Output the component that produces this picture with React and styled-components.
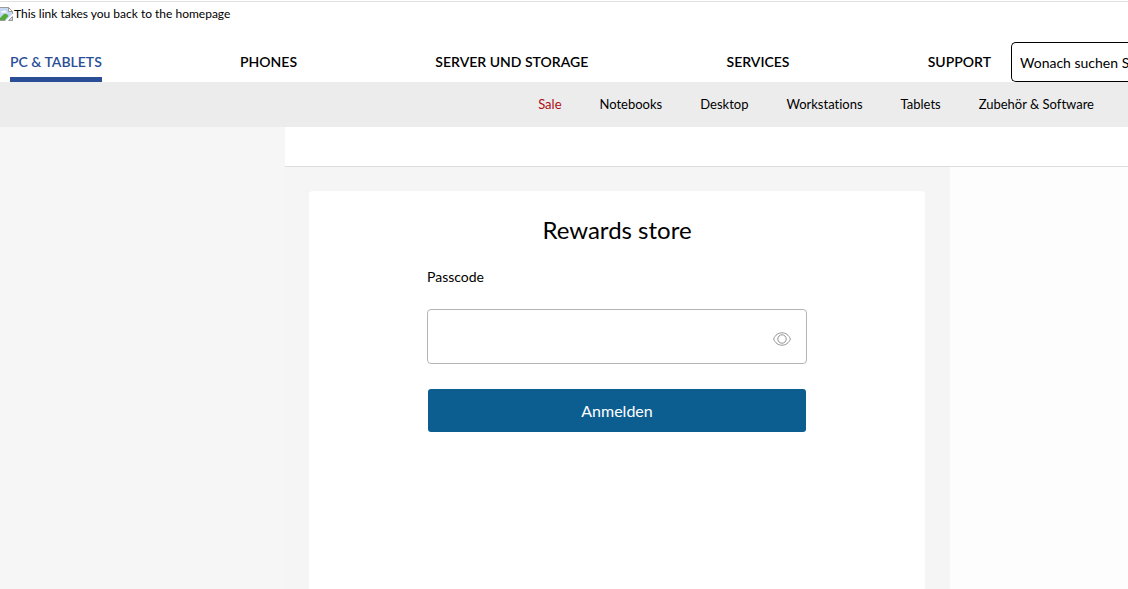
import React, { useState } from "react";
import styled, { createGlobalStyle } from "styled-components";

const GlobalStyle = createGlobalStyle`
  * {
    box-sizing: border-box;
  }
  body {
    margin: 0;
    background: #ffffff;
    color: #000000;
    font-family: Lato, "Open Sans", sans-serif;
    font-size: 14px;
    font-variant-ligatures: none;
    line-height: 20px;
  }
`;

const Page = styled.div`
  display: flex;
  flex-direction: column;
  min-height: 100vh;
  overflow: hidden;
  padding-top: 1px;
`;

const Header = styled.header`
  border-top: 1px solid #dfdfdf;
`;

const HomeLink = styled.a`
  display: flex;
  height: 40px;
  padding-top: 3px;
  color: #000000;
  font-size: 12px;
  line-height: 18px;
  text-decoration: none;
`;

const BrokenImage = styled.svg`
  flex: none;
  width: 16px;
  height: 16px;
  margin-top: 1px;
  margin-left: -2px;
`;

const MenuRow = styled.div`
  display: flex;
  gap: 20px;
  height: 40px;
  padding-left: 10px;
`;

const MainMenu = styled.nav`
  flex: 1;
  display: flex;
  justify-content: space-between;
`;

const MenuLink = styled.a`
  border-bottom: 5px solid ${(props) => (props.$active ? "#294e95" : "transparent")};
  color: ${(props) => (props.$active ? "#294e95" : "#000000")};
  font-weight: 600;
  line-height: 40px;
  text-decoration: none;
  white-space: nowrap;
`;

const SearchInput = styled.input`
  flex: none;
  width: 117px;
  padding: 2px 0 0 8px;
  border: 1px solid #000000;
  border-right: none;
  border-radius: 5px 0 0 5px;
  background: #ffffff;
  font: inherit;
  &::placeholder {
    color: #000000;
    opacity: 1;
  }
`;

const SubMenu = styled.nav`
  display: flex;
  justify-content: flex-end;
  gap: 38px;
  padding: 0 34px;
  background: #ececec;
`;

const SubLink = styled.a`
  color: ${(props) => (props.$sale ? "#ad0d14" : "#000000")};
  font-size: 13px;
  line-height: 45px;
  text-decoration: none;
  white-space: nowrap;
`;

const Content = styled.div`
  flex: 1;
  display: flex;
`;

const LeftSide = styled.aside`
  flex: none;
  width: 285px;
  background: #f6f6f6;
`;

const Main = styled.main`
  flex: 1;
  display: flex;
  flex-direction: column;
`;

const TopStrip = styled.div`
  height: 40px;
  border-bottom: 1px solid #dddddd;
`;

const Columns = styled.div`
  flex: 1;
  display: flex;
`;

const LoginColumn = styled.section`
  flex: 1;
  display: flex;
  padding: 24px 25px 0 24px;
  background: #f5f5f5;
`;

const RightSide = styled.aside`
  flex: none;
  width: 178px;
  background: #fdfdfd;
`;

const Card = styled.div`
  flex: 1;
  padding: 24px;
  border-radius: 4px 4px 0 0;
  background: #ffffff;
`;

const LoginForm = styled.form`
  display: flex;
  flex-direction: column;
  max-width: 380px;
  margin: 0 auto;
`;

const Title = styled.h1`
  margin: 0 0 22px;
  font-size: 24px;
  font-weight: normal;
  line-height: 30px;
  text-align: center;
`;

const Label = styled.label`
  margin-bottom: 22px;
`;

const PasscodeBox = styled.div`
  display: flex;
  height: 55px;
  padding-right: 15px;
  border: 1px solid #b5b5b5;
  border-radius: 4px;
`;

const PasscodeInput = styled.input`
  flex: 1;
  min-width: 0;
  padding: 0 12px;
  border: none;
  outline: none;
  background: transparent;
  font: inherit;
`;

const EyeButton = styled.button`
  display: flex;
  align-items: center;
  padding: 5px 0 0;
  border: none;
  background: transparent;
  cursor: pointer;
`;

const SubmitButton = styled.button`
  height: 43px;
  margin: 25px 1px 0;
  border: none;
  border-radius: 3px;
  background: #0c5e91;
  color: #ffffff;
  font-family: inherit;
  font-size: 16px;
  cursor: pointer;
`;

const menu = ["PC & TABLETS", "PHONES", "SERVER UND STORAGE", "SERVICES", "SUPPORT"];

const subMenu = [
  "Sale",
  "Notebooks",
  "Desktop",
  "Workstations",
  "Tablets",
  "Zubehör & Software",
];

function BrokenImageIcon() {
  return (
    <BrokenImage viewBox="0 0 16 16" aria-hidden="true">
      <path d="M1.5 1.5h9l4 4v9h-13z" fill="#c6d7f5" stroke="#9a9a9a" />
      <path d="M3 6.5c0-1 1-1.5 1.8-1.2C5.5 4 7.5 4.3 7.7 5.5c1 0 1.3.5 1.3 1H3z" fill="#ffffff" />
      <path d="M2 14v-2l4-4c1.5-.8 3 0 4.5 2L7 14z" fill="#56aa3c" />
      <path d="M10.5 1.5v4h4z" fill="#ffffff" stroke="#9a9a9a" />
      <path d="M6.5 15.5l9-8.5v3l-5.5 5.5z" fill="#ffffff" />
      <path d="M10.5 14.5l4-4v4z" fill="#c6d7f5" stroke="#9a9a9a" />
    </BrokenImage>
  );
}

function EyeIcon() {
  return (
    <svg width="18" height="14" viewBox="0 0 18 14" fill="none" stroke="#939393">
      <path d="M.6 7C2.2 3 5.2.8 9 .8S15.8 3 17.4 7c-1.6 4-4.6 6.2-8.4 6.2S2.2 11 .6 7z" />
      <circle cx="9" cy="7" r="4.2" />
    </svg>
  );
}

export default function App() {
  const [passcode, setPasscode] = useState("");
  const [visible, setVisible] = useState(false);

  return (
    <>
      <GlobalStyle />
      <Page>
        <Header>
          <HomeLink href="#">
            <BrokenImageIcon />
            This link takes you back to the homepage
          </HomeLink>
          <MenuRow>
            <MainMenu>
              {menu.map((name, index) => (
                <MenuLink href="#" key={name} $active={index === 0}>
                  {name}
                </MenuLink>
              ))}
            </MainMenu>
            <SearchInput type="text" aria-label="Suche" placeholder="Wonach suchen Sie?" />
          </MenuRow>
          <SubMenu>
            {subMenu.map((name) => (
              <SubLink href="#" key={name} $sale={name === "Sale"}>
                {name}
              </SubLink>
            ))}
          </SubMenu>
        </Header>
        <Content>
          <LeftSide />
          <Main>
            <TopStrip />
            <Columns>
              <LoginColumn>
                <Card>
                  <LoginForm onSubmit={(event) => event.preventDefault()}>
                    <Title>Rewards store</Title>
                    <Label htmlFor="passcode">Passcode</Label>
                    <PasscodeBox>
                      <PasscodeInput
                        id="passcode"
                        type={visible ? "text" : "password"}
                        value={passcode}
                        onChange={(event) => setPasscode(event.target.value)}
                      />
                      <EyeButton
                        type="button"
                        aria-label="Passcode anzeigen"
                        onClick={() => setVisible(!visible)}
                      >
                        <EyeIcon />
                      </EyeButton>
                    </PasscodeBox>
                    <SubmitButton type="submit">Anmelden</SubmitButton>
                  </LoginForm>
                </Card>
              </LoginColumn>
              <RightSide />
            </Columns>
          </Main>
        </Content>
      </Page>
    </>
  );
}
